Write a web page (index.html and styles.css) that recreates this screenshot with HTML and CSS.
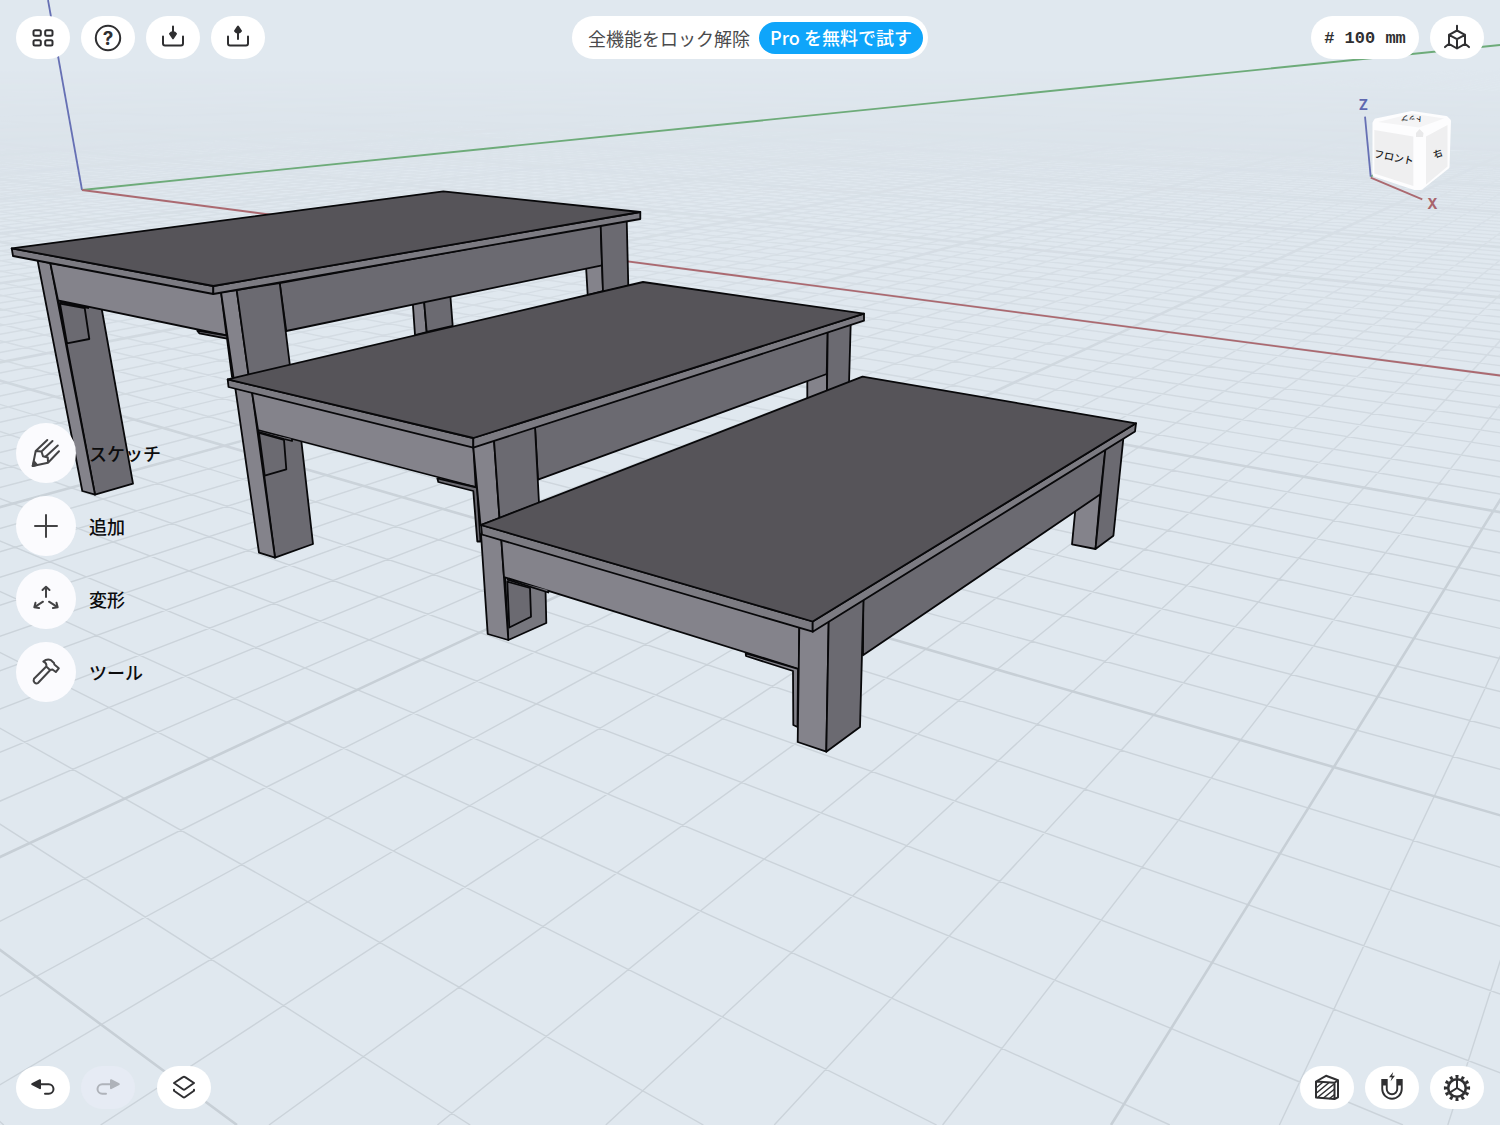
FILE: index.html
```html
<!DOCTYPE html>
<html lang="ja">
<head>
    <meta charset="UTF-8">
    <title>3D Viewer</title>
    <meta name="viewport" content="width=device-width, initial-scale=1">
    <link rel="stylesheet" href="styles.css">
</head>
<body>
    <svg class="scene" viewBox="0 0 1500 1125" preserveAspectRatio="xMidYMid slice" aria-hidden="true">
        <defs>
            <linearGradient id="fade" x1="0" y1="0" x2="0" y2="1125" gradientUnits="userSpaceOnUse">
                <stop offset="0.06" stop-color="#000"/>
                <stop offset="0.12" stop-color="#2c2c2c"/>
                <stop offset="0.2" stop-color="#5c5c5c"/>
                <stop offset="0.32" stop-color="#a0a0a0"/>
                <stop offset="0.5" stop-color="#fff"/>
            </linearGradient>
            <mask id="horizon" maskUnits="userSpaceOnUse" x="0" y="0" width="1500" height="1125">
                <rect width="1500" height="1125" fill="url(#fade)"/>
            </mask>
        </defs>
        <g mask="url(#horizon)">
            <path id="gridMinor" class="grid-minor"/>
            <path id="gridMajor" class="grid-major"/>
        </g>
        <path class="axis axis-z" d="M48 0L82 190"/>
        <path class="axis axis-y" d="M82 190L1500 45"/>
        <path class="axis axis-x" d="M82 190L1500 375.5"/>

        <!-- high table -->
        <g class="model">
            <path class="light" d="M412.7 302L424 300L426.7 332L415 335Z"/>
            <path class="dark" d="M424 300L450.3 295L452.7 326L426.7 332Z"/>
            <path class="light" d="M586 266L602 262L603 291L587.7 295Z"/>
            <path class="dark" d="M58 298L101 305L133 483.7L95 494.7Z"/>
            <path class="light" d="M37.5 260L50.3 263L95 494.7L82.3 491Z"/>
            <path class="dark" d="M60 303.7L84.7 308L89.3 339L67 343.3Z"/>
            <path class="light" d="M50.3 263L221 292L226.5 335.5L58 300.3Z"/>
            <path class="dark" d="M60 302L84 307L89 308"/>
            <path class="dark" d="M197.3 330.7L199.3 333.3L227 338.7L232 377L235 377L227 335.5Z"/>
            <path class="dark" d="M279.7 283L600.7 225L602 265.3L286.3 331Z"/>
            <path class="dark" d="M600.7 225L626.7 220L628.3 286L603 292Z"/>
            <path class="light" d="M221 292L236.7 290L248.7 376L233.7 379Z"/>
            <path class="dark" d="M236.7 290L279.7 283L290 366L248.7 376Z"/>
            <path class="edge" d="M11.7 248.3L213.3 286L213.3 294L13 256Z"/>
            <path class="edge" d="M213.3 286L640.3 212L640.3 219L213.3 294Z"/>
            <path class="top" d="M11.7 248.3L443.3 191.3L640.3 212L213.3 286Z"/>
        </g>

        <!-- middle table -->
        <g class="model">
            <path class="light" d="M807.3 379L827 372L827 392L807.3 399Z"/>
            <path class="dark" d="M258 428L301 438L313 544L275 557.7Z"/>
            <path class="light" d="M235.3 388L252 392L275 557.7L259 552.7Z"/>
            <path class="dark" d="M259 433L284 440L286.3 469.3L264.7 475.7Z"/>
            <path class="light" d="M252 392L473.3 446L475.7 487L258 430Z"/>
            <path class="dark" d="M259 432L284 439L292 441L292 439"/>
            <path class="dark" d="M437.3 478.3L438.3 482L473.3 491L477.3 541.5L480.5 541.5L477 487.5Z"/>
            <path class="dark" d="M535 427L827.7 332L826.7 374L538 479.7Z"/>
            <path class="dark" d="M827.7 332L850.7 324L849 384L827 392Z"/>
            <path class="light" d="M473.3 447L494 440L499.5 518L480.5 525Z"/>
            <path class="dark" d="M494 440L535 427L539 503L499.5 518Z"/>
            <path class="edge" d="M227.7 379.3L473.3 438L473.3 447.7L228.5 387Z"/>
            <path class="edge" d="M473.3 438L864 313.7L864 320.7L473.3 447.7Z"/>
            <path class="top" d="M227.7 379.3L643 282L864 313.7L473.3 438Z"/>
        </g>

        <!-- low table -->
        <g class="model">
            <path class="light" d="M1075.5 508L1100.4 492L1095.5 549L1072 544.3Z"/>
            <path class="light-alt" d="M505 577L545.5 589L546.3 623L508.3 640Z"/>
            <path class="dark" d="M507.3 581.7L530 588L531 616.7L509.3 627.5Z"/>
            <path class="light" d="M481 534L501.3 539L508.3 640L487.7 634Z"/>
            <path class="light" d="M501.3 539L799.3 627L799 669L504 577Z"/>
            <path class="dark" d="M507 579.5L548.3 592.5L548.3 590"/>
            <path class="light" d="M745.7 653.3L746 656L793 671L793.3 725L797.5 727L798 669Z"/>
            <path class="dark" d="M863.3 599L1105.4 449L1100.4 494.3L863 655.3Z"/>
            <path class="dark" d="M1105.4 449L1123.5 437L1113.4 535.7L1095.5 549Z"/>
            <path class="light" d="M799.3 627L828.7 621L826.3 751.7L797.7 742Z"/>
            <path class="dark" d="M828.7 621L863.5 599L860 727L826.3 751.7Z"/>
            <path class="edge" d="M481 525L812.7 621.5L812.7 631.7L482 534.5Z"/>
            <path class="edge" d="M812.7 621.5L1136 423.3L1135 431.5L812.7 631.7Z"/>
            <path class="top" d="M481 525L862.5 376.7L1136 423.3L812.7 621.5Z"/>
        </g>
    </svg>

    <div class="app">
        <header class="bar">
            <div class="group">
                <button class="pill" aria-label="デザイン一覧">
                    <svg class="icon" viewBox="0 0 28 28"><rect x="4.5" y="6.3" width="7.3" height="5.4" rx="1.5"/><rect x="16.2" y="6.3" width="7.3" height="5.4" rx="1.5"/><rect x="4.5" y="16.2" width="7.3" height="5.4" rx="1.5"/><rect x="16.2" y="16.2" width="7.3" height="5.4" rx="1.5"/></svg>
                </button>
                <button class="pill" aria-label="ヘルプ">
                    <svg class="icon" viewBox="0 0 28 28"><circle cx="14" cy="14" r="12.2"/><text class="question" x="14" y="20.5">?</text></svg>
                </button>
                <button class="pill" aria-label="読み込み">
                    <svg class="icon" viewBox="0 0 28 28"><path d="M4 12.5v7a2 2 0 0 0 2 2h16a2 2 0 0 0 2-2v-7M14 2.5v8"/><path class="solid" d="M11 9.8q1.5-2 3-1.4q1.5-.6 3 1.4L14 14.3z"/></svg>
                </button>
                <button class="pill" aria-label="書き出し">
                    <svg class="icon" viewBox="0 0 28 28"><path d="M4 12.5v7a2 2 0 0 0 2 2h16a2 2 0 0 0 2-2v-7M14 7v8"/><path class="solid" d="M11 7q1.5 2 3 1.4q1.5.6 3-1.4L14 2.5z"/></svg>
                </button>
            </div>
            <div class="banner">
                <span>全機能をロック解除</span>
                <button class="try">Pro を無料で試す</button>
            </div>
            <div class="group right">
                <button class="pill size"># 100 mm</button>
                <button class="pill" aria-label="表示">
                    <svg class="icon" viewBox="0 0 28 28"><path d="M14 6.5l8 4.3v9L14 24.5l-8-4.7v-9zM6 10.8l8 4.4 8-4.4M14 15.2v9.3M14 1.8v4.7M6 19.8l-4 3.3M22 19.8l4 3.3"/></svg>
                </button>
            </div>
        </header>

        <main class="stage">
            <nav class="tools">
                <button class="tool">
                    <span class="disc"><svg class="icon large" viewBox="0 0 30 30"><path d="M16.3 2L4.7 13L1.7 28L17 24.7L28 13.3M4.7 13L10.5 13.5L12 18.3L16.8 19.5L17 24.7M21.5 3L10.5 13.5M26.8 7.5L14.5 18.8"/><path class="solid" d="M3 23.5L6 26.8L1.7 28z"/></svg></span>
                    <span>スケッチ</span>
                </button>
                <button class="tool">
                    <span class="disc"><svg class="icon large" viewBox="0 0 30 30"><path d="M15 4v22M4 15h22"/></svg></span>
                    <span>追加</span>
                </button>
                <button class="tool">
                    <span class="disc"><svg class="icon large" viewBox="0 0 30 30"><path d="M15 13V3M11.5 6L15 2.7L18.5 6M12 17.7L3.5 23.2M4.5 18.8L3.3 23.3L8 24M18 17.7l8.5 5.5M25.5 18.8l1.2 4.5L22 24"/></svg></span>
                    <span>変形</span>
                </button>
                <button class="tool">
                    <span class="disc"><svg class="icon large" viewBox="0 0 30 30"><path d="M15.3 9.5L3 21.8Q2 23.8 3.5 25.5Q5.3 27.3 7 26L19.3 13M12.3 4.5Q16 1.5 20 3.2L23 6Q23 8 24.5 8.5L27.8 11.3L24.8 15L21.5 12.5L19 13L15.3 9.5Q16 6 12.3 4.5Z"/></svg></span>
                    <span>ツール</span>
                </button>
            </nav>
            <svg class="view-cube" viewBox="1350 90 120 130">
                <path class="axis axis-y" d="M1370.7 176.7l6-4"/>
                <path class="cube-body" d="M1374.5 123L1376 120.5L1412 113L1446 118L1449 121L1447.5 167L1421 188L1415 188L1374.5 174.5Z"/>
                <path class="cube-top" d="M1378 122L1412 113.5L1444 118.5L1419 127.5Z"/>
                <path class="cube-face" d="M1374.3 130L1413.3 136.5V186L1374.3 173.5Z"/>
                <path class="cube-face" d="M1426 136.5L1447.5 125V166.5L1426 184.5Z"/>
                <path class="cube-corner" d="M1416 133L1419.5 129L1423.5 133L1423 137H1416Z"/>
                <path class="axis axis-z" d="M1365 116.7L1370.7 176.7"/>
                <path class="axis axis-x" d="M1370.7 177.7L1422.3 199.3"/>
                <text class="cube-text" x="1394" y="161" transform="rotate(11 1394 157)">フロント</text>
                <text class="cube-text tiny" x="1412" y="121" transform="rotate(184 1412 118.5)">トップ</text>
                <text class="cube-text side" x="1438" y="157" transform="rotate(-20 1438 154)">右</text>
                <text class="cube-axis z" x="1363.5" y="109.5">Z</text>
                <text class="cube-axis x" x="1432.5" y="209">X</text>
            </svg>
        </main>

        <footer class="bar">
            <div class="group">
                <button class="pill" aria-label="元に戻す">
                    <svg class="icon" viewBox="0 0 28 28"><path class="solid" d="M3.2 10.2L11 6.2V14.2z"/><path d="M11 10.2h8.7a4.8 4.8 0 0 1 0 9.6H16"/></svg>
                </button>
                <button class="pill" aria-label="やり直す" disabled>
                    <svg class="icon" viewBox="0 0 28 28"><path class="solid" d="M24.8 10.2L17 6.2V14.2z"/><path d="M17 10.2H8.3a4.8 4.8 0 0 0 0 9.6H12"/></svg>
                </button>
                <button class="pill apart" aria-label="アイテム">
                    <svg class="icon" viewBox="0 0 28 28"><path d="M12.9 3.2q1.1-.8 2.2 0L24 9L15.1 15.3q-1.1.8-2.2 0L4 9zM4 15.7v1l8.9 6.3q1.1.8 2.2 0L24 16.7v-1"/></svg>
                </button>
            </div>
            <div class="group right">
                <button class="pill" aria-label="断面表示">
                    <svg class="icon" viewBox="0 0 28 28"><path d="M3 7.5L21.5 8.8V25L3 23.5ZM3 7.5L13 1.8L25 6.3V23.3L21.5 25M21.5 8.8L25 6.3"/><path class="hatch" d="M3.5 13.5L9.5 8.5M3.5 19L15.5 9M4.5 23.5L20.5 10.5M10.5 24L21 15.5M16.5 24.5L21 21"/></svg>
                </button>
                <button class="pill" aria-label="スナップ">
                    <svg class="icon" viewBox="0 0 28 28"><path class="magnet" d="M6.5 5v10a7.5 7.5 0 0 0 15 0V5"/><path class="magnet-gap" d="M6.5 11.5v3.5a7.5 7.5 0 0 0 15 0v-3.5"/><path class="bolt" d="M15.2-2L11 3.2H13.8L12.6 7.2L17 1.8H14.2Z"/></svg>
                </button>
                <button class="pill" aria-label="設定">
                    <svg class="icon" viewBox="0 0 28 28"><circle class="ring" cx="14" cy="14" r="8.8"/><circle class="teeth" cx="14" cy="14" r="11.4" pathLength="24"/><path d="M14 6v8L7.5 18.2M14 14l6.5 4.2"/></svg>
                </button>
            </div>
        </footer>
    </div>

    <script>
        // both line families run from the bottom edge to a vanishing point on the horizon
        const horizon = 13.5;
        const base = 1125;
        const paths = { major: '', minor: '' };

        function drawFamily(vanishX, start, step, from, to) {
            for (let i = from; i <= to; i++) {
                const kind = i % 10 === 0 ? 'major' : 'minor';
                paths[kind] += `M${vanishX} ${horizon}L${(start + step * i).toFixed(1)} ${base}`;
            }
        }

        drawFamily(1803, 1111, 168.4, -200, 2);
        drawFamily(-1267, 237, 233.2, -1, 160);
        document.getElementById('gridMinor').setAttribute('d', paths.minor);
        document.getElementById('gridMajor').setAttribute('d', paths.major);
    </script>
</body>
</html>
```
FILE: styles.css
```css
* {
    box-sizing: border-box;
}
body {
    margin: 0;
    min-height: 100vh;
    background: #e0e8ef;
    color: #2f2f31;
    font-family: "Noto Sans CJK JP", "Noto Sans", sans-serif;
    overflow: hidden;
}
button {
    font: inherit;
    color: inherit;
    border: none;
    padding: 0;
    cursor: pointer;
}

/* 3D scene */
.scene {
    position: absolute;
    inset: 0;
    width: 100%;
    height: 100%;
}
.grid-minor {
    fill: none;
    stroke: #cbd3da;
    stroke-width: 1.4;
}
.grid-major {
    fill: none;
    stroke: #c7cfd6;
    stroke-width: 2.6;
}
.axis {
    fill: none;
    stroke-width: 1.8;
}
.axis-x {
    stroke: #ab6970;
}
.axis-y {
    stroke: #6dab79;
}
.axis-z {
    stroke: #6670b4;
}
.model path {
    stroke: #08080a;
    stroke-width: 1.8;
    stroke-linejoin: round;
}
.model .top {
    fill: #565459;
}
.model .light {
    fill: #84838b;
}
.model .light-alt {
    fill: #77777e;
}
.model .dark {
    fill: #6b6a71;
}
.model .edge {
    fill: #7c7b82;
}

/* overlay */
.app {
    position: relative;
    display: flex;
    flex-direction: column;
    min-height: 100vh;
    padding: 16px;
}
.bar {
    display: flex;
    justify-content: space-between;
    align-items: center;
}
.group {
    display: flex;
    flex: 1;
    gap: 11px;
}
.group.right {
    justify-content: flex-end;
}
.pill {
    display: flex;
    align-items: center;
    justify-content: center;
    width: 54px;
    height: 43px;
    border-radius: 22px;
    background: #fff;
}
.pill:disabled {
    background: #e6ebf4;
    color: #afb3ba;
    cursor: default;
}
.pill.apart {
    margin-left: 11px;
}
.pill.size {
    width: 108px;
    padding-top: 2px;
    font-family: "Liberation Mono", monospace;
    font-size: 17px;
    font-weight: bold;
}
.icon {
    width: 28px;
    height: 28px;
    fill: none;
    stroke: currentColor;
    stroke-width: 2;
    stroke-linecap: round;
    stroke-linejoin: round;
    overflow: visible;
}
.icon.large {
    width: 30px;
    height: 30px;
}
.icon .solid {
    fill: currentColor;
}
.icon .hatch {
    stroke-width: 1.5;
}
.icon .magnet {
    stroke-width: 6.4;
    stroke-linecap: butt;
}
.icon .magnet-gap {
    stroke: #fff;
    stroke-width: 2.6;
    stroke-linecap: butt;
}
.icon .bolt {
    fill: currentColor;
    stroke: none;
}
.icon .ring {
    stroke-width: 2.6;
}
.icon .teeth {
    stroke-width: 3.4;
    stroke-linecap: butt;
    stroke-dasharray: 1 1;
    stroke-dashoffset: 0.5;
}
.icon .question {
    fill: currentColor;
    stroke: none;
    font-family: Inter, sans-serif;
    font-size: 19px;
    font-weight: bold;
    text-anchor: middle;
}
.banner {
    display: flex;
    align-items: center;
    gap: 9px;
    height: 43px;
    padding: 0 5px 0 16px;
    border-radius: 22px;
    background: #fff;
    color: #4a4a4c;
    font-size: 18px;
    line-height: 24px;
    font-weight: 400;
}
.try {
    height: 32px;
    padding: 0 11px 2px;
    border-radius: 16px;
    background: #0fa5fa;
    color: #fff;
    font-weight: 500;
}
.stage {
    display: flex;
    flex: 1;
    justify-content: space-between;
}
.tools {
    display: flex;
    flex-direction: column;
    justify-content: center;
    gap: 13px;
}
.tool {
    display: flex;
    align-items: center;
    gap: 13px;
    background: none;
    color: #0c0c0d;
    font-size: 18px;
    font-weight: 500;
}
.disc {
    display: flex;
    align-items: center;
    justify-content: center;
    width: 60px;
    height: 60px;
    border-radius: 50%;
    background: #fbfbfe;
    color: #434345;
}

/* orientation cube */
.view-cube {
    width: 120px;
    height: 130px;
    margin: 31px 14px 0 0;
}
.cube-body {
    fill: #fdfdfe;
    stroke: #fdfdfe;
    stroke-width: 4;
    stroke-linejoin: round;
}
.cube-top {
    fill: #f4f4f5;
}
.cube-face {
    fill: #efeff0;
}
.cube-corner {
    fill: #e9e9ea;
}
.cube-text {
    font-size: 10px;
    font-weight: 500;
    fill: #1c1c1e;
    text-anchor: middle;
}
.cube-text.tiny {
    font-size: 7px;
}
.cube-text.side {
    font-size: 9px;
}
.cube-axis {
    font-family: Inter, sans-serif;
    font-size: 14px;
    font-weight: bold;
    text-anchor: middle;
}
.cube-axis.z {
    fill: #5f69b0;
}
.cube-axis.x {
    fill: #a8636b;
}
```
